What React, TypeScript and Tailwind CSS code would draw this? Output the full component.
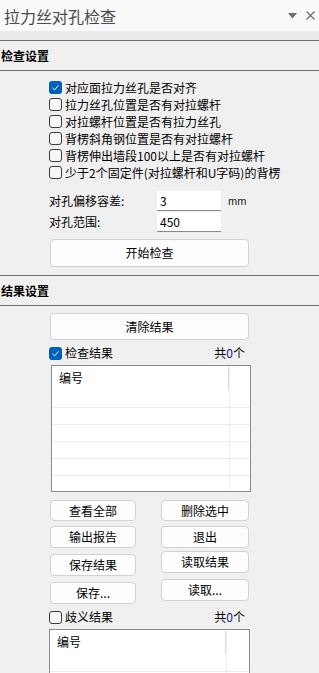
import React from "react";

const CJK = { fontFamily: '"Noto Sans CJK SC", "Microsoft YaHei", sans-serif' };

function Check({ checked }: { checked?: boolean }) {
  if (checked) {
    return (
      <span className="inline-flex w-[13px] h-[13px] rounded-[3px] bg-[#005fb8] items-center justify-center shrink-0">
        <svg width="9" height="9" viewBox="0 0 9 9">
          <path d="M1.5 4.8 L3.6 6.8 L7.6 2.4" stroke="#fff" strokeWidth="1" fill="none" />
        </svg>
      </span>
    );
  }
  return <span className="inline-block w-[13px] h-[13px] rounded-[3px] border border-[#3c3c3c] bg-[#f7f7f7] shrink-0" />;
}

function CheckRow({ label, checked }: { label: React.ReactNode; checked?: boolean }) {
  return (
    <div className="h-[17px] flex items-center gap-[3px] text-[12px] leading-[17px] text-black">
      <Check checked={checked} />
      <span>{label}</span>
    </div>
  );
}

function Btn({ children, className = "" }: { children: React.ReactNode; className?: string }) {
  return (
    <div
      className={
        "flex items-center justify-center bg-[#fdfdfd] border border-[#d2d2d2] rounded-[4px] text-[12px] text-black " +
        className
      }
    >
      {children}
    </div>
  );
}

function SectionHeader({ title }: { title: string }) {
  return (
    <div className="h-[31px] border-y border-[#707070] flex items-center pl-[1px] text-[12px] font-bold text-black">
      {title}
    </div>
  );
}

function ListBox({ rows, className = "", divX }: { rows: number; className?: string; divX: number }) {
  return (
    <div className={"bg-white border border-[#8b8b93] relative overflow-hidden " + className}>
      <div className="h-[24px] flex items-center pl-[7px] text-[12px] text-black">编号</div>
      <div className="h-[17px]" />
      {Array.from({ length: rows }).map((_, i) => (
        <div key={i} className="h-[17px] border-t border-[#ececec]" />
      ))}
      <div className="absolute top-0 bottom-0 w-px bg-[#eeeeee]" style={{ left: divX }} />
      <div className="absolute top-[1px] h-[23px] w-px bg-[#dcdcdc]" style={{ left: divX - 1 }} />
    </div>
  );
}

export default function App() {
  return (
    <div className="w-[319px] h-[673px] overflow-hidden bg-[#f0f0f0]" style={CJK}>
      {/* title */}
      <div className="h-[31px] bg-[#f9f9f9] flex items-center justify-between pl-[4px] pr-[4px]">
        <span className="text-[16px] text-[#4a4a4a] leading-none">拉力丝对孔检查</span>
        <div className="flex items-center gap-[9px] text-[#6f6f6f]">
          <svg width="9" height="6" viewBox="0 0 9 6">
            <path d="M0 0 L9 0 L4.5 5.5 Z" fill="#6f6f6f" />
          </svg>
          <svg width="9" height="9" viewBox="0 0 9 9">
            <path d="M0.5 0.5 L8.5 8.5 M8.5 0.5 L0.5 8.5" stroke="#6f6f6f" strokeWidth="1.3" />
          </svg>
        </div>
      </div>
      <div className="h-[9px] bg-[#ebebeb]" />

      <SectionHeader title="检查设置" />

      <div className="pl-[49px] pt-[8px]">
        <CheckRow checked label="对应面拉力丝孔是否对齐" />
        <CheckRow label="拉力丝孔位置是否有对拉螺杆" />
        <CheckRow label="对拉螺杆位置是否有拉力丝孔" />
        <CheckRow label="背楞斜角钢位置是否有对拉螺杆" />
        <CheckRow label="背楞伸出墙段100以上是否有对拉螺杆" />
        <CheckRow label="少于2个固定件(对拉螺杆和U字码)的背楞" />

        <div className="mt-[10px] flex items-center h-[20px]">
          <span className="w-[108px] text-[12px] text-black">对孔偏移容差:</span>
          <div className="w-[64px] h-[20px] bg-white border-b border-[#8a8a8a] text-[12px] pl-[3px] flex items-center">3</div>
          <span className="ml-[7px] text-[11px] text-[#222]" style={{ fontFamily: '"Liberation Sans", sans-serif' }}>mm</span>
        </div>
        <div className="mt-[1px] flex items-center h-[20px]">
          <span className="w-[108px] text-[12px] text-black">对孔范围:</span>
          <div className="w-[64px] h-[20px] bg-white border-b border-[#8a8a8a] text-[12px] pl-[3px] flex items-center">450</div>
        </div>
        <Btn className="mt-[7px] ml-[1px] w-[199px] h-[28px]">开始检查</Btn>
      </div>

      <div className="h-[8px]" />
      <SectionHeader title="结果设置" />

      <div className="pl-[50px] pt-[7px]">
        <Btn className="w-[199px] h-[27px]">清除结果</Btn>
        <div className="mt-[5px] h-[16px] w-[196px] flex items-center justify-between -ml-[1px]">
          <div className="flex items-center gap-[3px] text-[12px] text-black">
            <Check checked />
            <span>检查结果</span>
          </div>
          <span className="text-[12px] text-black">共<span className="text-[#1a1a80]">0</span>个</span>
        </div>
        <ListBox rows={5} divX={177} className="mt-[4px] ml-[1px] w-[200px] h-[127px]" />

        <div className="mt-[8px] flex gap-[25px]">
          <div className="flex flex-col">
            <Btn className="w-[86px] h-[21px]">查看全部</Btn>
            <Btn className="mt-[5px] w-[86px] h-[22px]">输出报告</Btn>
            <Btn className="mt-[6px] w-[86px] h-[22px]">保存结果</Btn>
            <Btn className="mt-[6px] w-[86px] h-[22px]">保存...</Btn>
          </div>
          <div className="flex flex-col">
            <Btn className="w-[88px] h-[21px]">删除选中</Btn>
            <Btn className="mt-[5px] w-[88px] h-[22px]">退出</Btn>
            <Btn className="mt-[3px] w-[88px] h-[22px]">读取结果</Btn>
            <Btn className="mt-[6px] w-[88px] h-[22px]">读取...</Btn>
          </div>
        </div>

        <div className="mt-[5px] h-[16px] w-[196px] flex items-center justify-between -ml-[1px]">
          <div className="flex items-center gap-[3px] text-[12px] text-black">
            <Check />
            <span>歧义结果</span>
          </div>
          <span className="text-[12px] text-black">共<span className="text-[#1a1a80]">0</span>个</span>
        </div>
        <ListBox rows={3} divX={176} className="mt-[4px] -ml-[1px] w-[201px] h-[80px]" />
      </div>
    </div>
  );
}
